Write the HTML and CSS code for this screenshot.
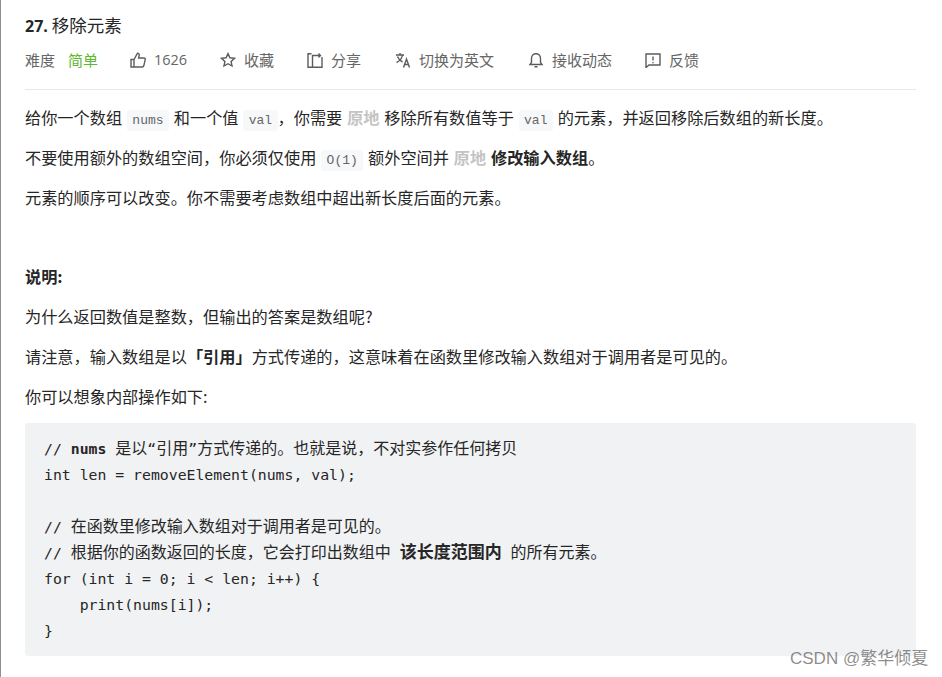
FILE: index.html
```html
<!DOCTYPE html>
<html lang="zh-CN">
<head>
<meta charset="utf-8">
<title>27. 移除元素</title>
<link rel="stylesheet" href="styles.css">
</head>
<body>
<main class="page">
  <header class="head">
    <h1 class="title"><b>27.</b> 移除元素</h1>
    <div class="meta">
      <span class="level">难度<em>简单</em></span>
      <span class="item like"><svg viewBox="0 0 16 16"><path d="M1 7.500h3V15H1zM4 7.500 7.500 1.200c1.300 0 2 1 1.700 2.200L8.600 6H14c.9 0 1.400.8 1.200 1.600l-1.400 6.200c-.2.7-.7 1.200-1.500 1.200H4"/></svg>1626</span>
      <span class="item fav"><svg viewBox="0 0 16 16"><path d="m8 1.600 1.900 4.200 4.600.5-3.400 3.100.9 4.600-4-2.300-4 2.300.9-4.600-3.400-3.100 4.600-.5z"/></svg>收藏</span>
      <span class="item share"><svg viewBox="0 0 16 16"><path d="M4.500 1.800H1v13.500h14V5M5.500 15V3.500h8M11.500 1.500l2 2-2 2"/></svg>分享</span>
      <span class="item trans"><svg viewBox="0 0 16 16"><path d="M1 3h8M5 1v2M7.500 3C7 6 4.500 9 1.500 10.500M2.500 4.500C3.500 7 5.500 9 7.500 10M8.500 15.500l3-8.500 3 8.500M9.500 12.500h4"/></svg>切换为英文</span>
      <span class="item bell"><svg viewBox="0 0 16 16"><path d="M2 12.500h12l-1.500-2V6.500C12.500 3.500 10.500 1.800 8 1.800S3.500 3.500 3.500 6.500v4zM6.500 14.800h3"/></svg>接收动态</span>
      <span class="item report"><svg viewBox="0 0 16 16"><path d="M1 2h14v11H4l-3 2.500zM8 4.500v4M8 10v1.200"/></svg>反馈</span>
    </div>
  </header>
  <article class="content">
    <p>给你一个数组 <code>nums</code> 和一个值 <code>val</code>，你需要 <strong class="faint">原地</strong> 移除所有数值等于 <code>val</code> 的元素，并返回移除后数组的新长度。</p>
    <p>不要使用额外的数组空间，你必须仅使用 <code>O(1)</code> 额外空间并 <strong class="faint">原地</strong> <strong>修改输入数组</strong>。</p>
    <p>元素的顺序可以改变。你不需要考虑数组中超出新长度后面的元素。</p>
    <p>&nbsp;</p>
    <p><strong>说明:</strong></p>
    <p>为什么返回数值是整数，但输出的答案是数组呢?</p>
    <p>请注意，输入数组是以<strong>「引用」</strong>方式传递的，这意味着在函数里修改输入数组对于调用者是可见的。</p>
    <p>你可以想象内部操作如下:</p>
    <pre class="code">// <b>nums</b> <span class="zh">是以</span>“<span class="zh">引用</span>”<span class="zh">方式传递的。也就是说，不对实参作任何拷贝</span>
int len = removeElement(nums, val);

// <span class="zh">在函数里修改输入数组对于调用者是可见的。</span>
// <span class="zh">根据你的函数返回的长度，它会打印出数组中</span> <b class="zh strong">该长度范围内</b> <span class="zh">的所有元素。</span>
for (int i = 0; i &lt; len; i++) {
    print(nums[i]);
}</pre>
  </article>
</main>
<div class="watermark">CSDN @繁华倾夏</div>
</body>
</html>
```
FILE: styles.css
```css
* { box-sizing: border-box; }
html, body { margin: 0; height: 100%; overflow: hidden; background: #fff; }
body {
  font-family: "Noto Sans CJK SC", "Noto Sans", sans-serif;
  color: #262626;
  font-size: 16.200px;
  position: relative;
}
.page {
  height: 677px;
  border-left: 1px solid #8f8f8f;
  padding: 12px 26px 0 24px;
}
.head { border-bottom: 1px solid #e8e8e8; height: 78px; }
.title {
  margin: 0;
  font-size: 17.500px;
  line-height: 26px;
  font-weight: 400;
}
.title b { font-family: "Open Sans", sans-serif; font-size: 16px; font-weight: 700; }
.meta {
  display: flex;
  align-items: center;
  margin-top: 8px;
  height: 26px;
  font-size: 15px;
  color: #666;
  line-height: 26px;
}
.level { width: 105px; }
.level em { font-style: normal; color: #5cb82c; margin-left: 13px; }
.item { display: flex; align-items: center; gap: 8px; }
.item svg {
  width: 16px;
  height: 16px;
  fill: none;
  stroke: #5c5c5c;
  stroke-width: 1.4;
  flex: none;
}
.like { width: 90px; font-family: "Open Sans", sans-serif; font-size: 14.500px; }
.fav { width: 87px; }
.share { width: 88px; }
.trans { width: 133px; }
.bell { width: 117px; }
.content { padding-top: 15px; }
.content p {
  margin: 0 0 14px;
  line-height: 25.800px;
  height: 25.800px;
  white-space: nowrap;
  word-spacing: 1.200px;
}
.content strong { font-weight: 700; }
.content .faint { color: #c4c4c4; }
code {
  font-family: "Liberation Mono", monospace;
  font-size: 13px;
  color: #666;
  background: #f7f8fa;
  border-radius: 3px;
  padding: 3px 5.400px;
  word-spacing: 0;
}
.code {
  margin: 0;
  background: #f1f2f4;
  border-radius: 3px;
  padding: 13px 19px 12px;
  height: 233px;
  font-family: "DejaVu Sans Mono", monospace;
  font-size: 14.800px;
  line-height: 26px;
  color: #262626;
  overflow: hidden;
}
.zh {
  font-family: "Noto Sans CJK SC", sans-serif;
  font-size: 16px;
  line-height: 1;
}
.zh.strong { font-size: 17px; }
.watermark {
  position: absolute;
  left: 790px;
  top: 647px;
  font-size: 17px;
  line-height: 24px;
  color: rgba(90, 90, 90, 0.7);
  white-space: nowrap;
  font-family: "Liberation Sans", "Noto Sans CJK SC", sans-serif;
}
```
